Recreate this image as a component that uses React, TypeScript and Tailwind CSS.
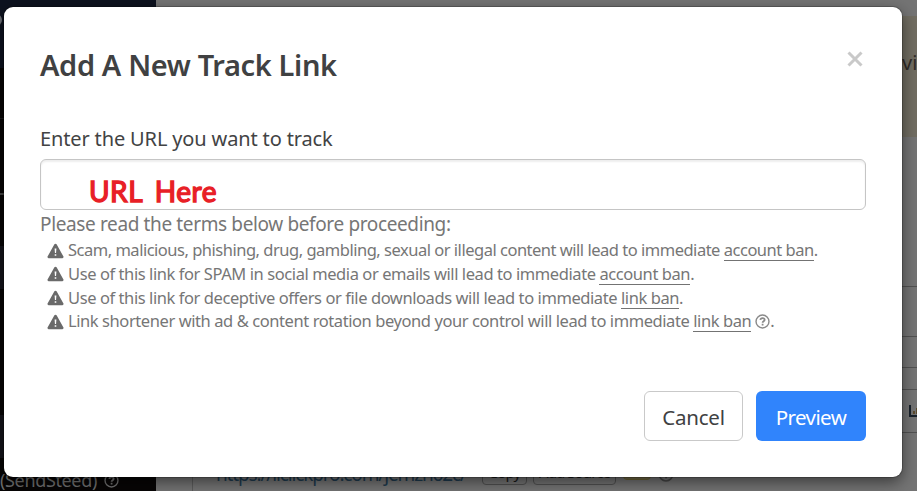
import clsx from "clsx";
import type { ReactNode } from "react";

interface Term {
  text: string;
  tracking: string;
  link: string;
  hasHelp?: boolean;
}

const terms: Term[] = [
  {
    text: "Scam, malicious, phishing, drug, gambling, sexual or illegal content will lead to immediate",
    tracking: "tracking-[-0.49px]",
    link: "account ban",
  },
  {
    text: "Use of this link for SPAM in social media or emails will lead to immediate",
    tracking: "tracking-[-0.42px]",
    link: "account ban",
  },
  {
    text: "Use of this link for deceptive offers or file downloads will lead to immediate",
    tracking: "tracking-[-0.42px]",
    link: "link ban",
  },
  {
    text: "Link shortener with ad & content rotation beyond your control will lead to immediate",
    tracking: "tracking-[-0.42px]",
    link: "link ban",
    hasHelp: true,
  },
];

function WarningIcon() {
  return (
    <svg viewBox="0 0 17 16" className="h-4 w-[17px] shrink-0" aria-hidden="true">
      <path
        d="M7.4 1.3a1.3 1.3 0 0 1 2.2 0l6.7 12a1.2 1.2 0 0 1-1.1 1.9H1.8a1.2 1.2 0 0 1-1.1-1.9z"
        fill="#6a6a6a"
      />
      <path d="M7.6 5.5h1.8l-.35 4.6h-1.1zM7.7 11.2h1.6v1.6H7.7z" fill="#fff" />
    </svg>
  );
}

function HelpIcon({ className }: { className?: string }) {
  return (
    <svg viewBox="0 0 16 16" fill="none" stroke="currentColor" className={className} aria-hidden="true">
      <circle cx="8" cy="8" r="6.9" strokeWidth="1.5" />
      <path d="M5.7 6.3c.2-1.4 1.2-2 2.3-2s2.3.7 2.3 1.9c0 1.6-2.2 1.6-2.2 3.2" strokeWidth="1.9" />
      <path d="M8.1 10.4v1.9" strokeWidth="1.9" />
    </svg>
  );
}

function TermRow({ term }: { term: Term }) {
  return (
    <li className="flex h-[23.6px] items-center">
      <WarningIcon />
      <span className={clsx("ml-1 whitespace-nowrap", term.tracking)}>
        {term.text}{" "}
        <a className="inline-block h-[22px] border-b border-[#737373] leading-[21px]">{term.link}</a>
        {!term.hasHelp && "."}
      </span>
      {term.hasHelp && (
        <span className="flex items-center">
          <HelpIcon className="ml-1 size-[15px] text-[#8a8a8a]" />.
        </span>
      )}
    </li>
  );
}

function SmallButton({ className, children }: { className?: string; children: ReactNode }) {
  return (
    <span
      className={clsx(
        "flex h-[26px] shrink-0 items-center justify-center rounded border border-[#505050] text-[15px] whitespace-nowrap text-[#191919]",
        className,
      )}
    >
      {children}
    </span>
  );
}

function PageBehind() {
  return (
    <div className="flex h-full w-full" aria-hidden="true">
      <aside className="flex w-[156px] shrink-0 flex-col bg-[#070505]">
        <div className="h-[68px] bg-[#0d121f] pt-[14px]">
          <div className="-ml-[10px] size-3 rounded-full bg-[#6f7278]" />
        </div>
        <div className="mt-[50px] h-px bg-[#1b1b1c]" />
        <div className="mt-[74px] h-[2px] bg-[#454545]" />
        <div className="mt-[51px] h-[43px] bg-[#14141b]" />
        <div className="mt-[126px] h-[43px] bg-[#14141b]" />
        <div className="mt-auto flex h-[22px] items-center gap-[7px] text-lg whitespace-nowrap text-[#707070]">
          <span className="tracking-[-0.35px]">(SendSteed)</span>
          <HelpIcon className="size-[15px]" />
        </div>
      </aside>
      <main className="flex flex-1 flex-col bg-[#747474]">
        <div className="mt-4 ml-auto flex h-[121px] w-[30px] bg-[#716d62] pt-[33px] pl-[15px] text-xl text-[#2f2a26]">
          vi
        </div>
        <div className="mt-[149px] ml-auto h-px w-[30px] bg-[#525252]" />
        <div className="mt-[49px] ml-auto h-px w-[30px] bg-[#525252]" />
        <div className="mt-[30px] ml-auto h-px w-[30px] bg-[#525252]" />
        <div className="mt-[21px] ml-auto flex h-[44px] w-[30px] items-center border-y border-[#525252] pl-[22px]">
          <svg viewBox="0 0 16 12" className="h-3 w-4 shrink-0">
            <path d="M1 0v11h14" fill="none" stroke="#17202a" strokeWidth="2" />
            <path d="M4 6h2v3H4zM7 3h2v6H7z" fill="#5b4a2c" />
          </svg>
        </div>
        <div className="mt-auto ml-[36px] flex h-[32px] items-start border-l border-[#5c5c5c] text-[#191919]">
          <span className="ml-[23px] w-[253px] shrink-0 text-[19px] leading-[30px] tracking-[-1.15px] whitespace-nowrap text-[#1e3a4e]">
            https://liclickpro.com/jemzn62c/
          </span>
          <SmallButton className="ml-[13px] w-[45px] tracking-[-0.8px]">Copy</SmallButton>
          <SmallButton className="ml-[6px] w-[83px] tracking-[-0.9px]">Add Source</SmallButton>
          <span className="ml-[7px] h-[21px] w-[28px] shrink-0 rounded border border-[#6d6436] bg-[#716a48]" />
          <HelpIcon className="mt-[7px] ml-[7px] size-4 text-[#454545]" />
        </div>
      </main>
    </div>
  );
}

function TrackLinkDialog() {
  return (
    <div
      role="dialog"
      className="absolute top-[7px] left-1 flex h-[470px] w-[898px] flex-col rounded-[9px] bg-white px-9 shadow-[0_5px_15px_rgba(0,0,0,0.5),0_0_0_1px_rgba(0,0,0,0.2)]"
    >
      <div className="flex h-[112px] items-start justify-between pt-[38px]">
        <h1 className="text-[29px] leading-[40px] font-semibold tracking-[-0.37px] text-[#404142]">
          Add A New Track Link
        </h1>
        <svg viewBox="0 0 16 16" className="mt-[6px] mr-[3px] size-4" stroke="#c9c9c9" strokeWidth="3">
          <path d="M1.5 1.5l13 13M14.5 1.5l-13 13" />
        </svg>
      </div>
      <label className="flex h-10 items-center text-xl tracking-[-0.14px] text-[#424344]">
        Enter the URL you want to track
      </label>
      <div className="flex h-[51px] shrink-0 items-center rounded-md border border-[#c5c5c5] pt-[13px] pl-12 shadow-[inset_0_2px_2px_rgba(0,0,0,0.07)]">
        <span className="font-['Lato'] text-[28px] leading-8 font-normal tracking-[0.5px] text-[#e81f27] [-webkit-text-stroke:1.4px_#e81f27] [word-spacing:5px]">
          URL Here
        </span>
      </div>
      <div className="text-[#767676]">
        <p className="h-[29px] text-[19px] leading-[29px] tracking-[-0.37px]">
          Please read the terms below before proceeding:
        </p>
        <ul className="pl-[7px] text-[16.5px]">
          {terms.map((term) => (
            <TermRow key={term.text} term={term} />
          ))}
        </ul>
      </div>
      <div className="mt-auto mb-9 flex justify-end gap-[13px] text-[20.5px]">
        <button className="h-[50px] w-[99px] rounded-md border border-[#c9c9c9] bg-white pt-0.5 tracking-[-0.2px] text-[#404142]">
          Cancel
        </button>
        <button className="h-[50px] w-[110px] rounded-md bg-[#3084fc] pt-0.5 tracking-[-0.6px] text-white">
          Preview
        </button>
      </div>
    </div>
  );
}

export default function App() {
  return (
    <div className="relative h-[491px] w-[917px] overflow-hidden font-['Noto_Sans',sans-serif]">
      <PageBehind />
      <TrackLinkDialog />
    </div>
  );
}
